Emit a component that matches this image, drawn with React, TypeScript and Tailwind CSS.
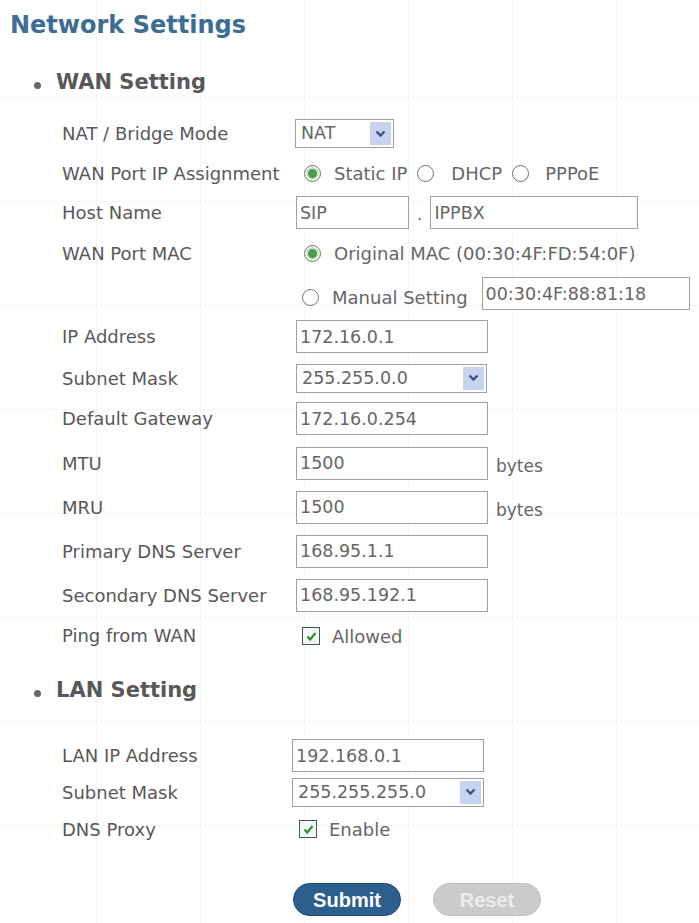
import React from 'react';

const font = { fontFamily: '"DejaVu Sans", Verdana, sans-serif' };

function Radio({ checked }: { checked?: boolean }) {
  return (
    <span className="w-[17px] h-[17px] rounded-full border-[1.5px] border-[#707070] bg-white flex items-center justify-center shrink-0">
      {checked && <span className="w-[9px] h-[9px] rounded-full bg-[#4c9c4c] ring-2 ring-[#c8e6c8]" />}
    </span>
  );
}

function Check() {
  return (
    <span className="w-[18px] h-[18px] border border-[#3d5a55] bg-[#f4f8f4] flex items-center justify-center shrink-0">
      <svg width="13" height="13" viewBox="0 0 13 13">
        <path d="M2.5 6.5 L5.2 9.5 L10.5 3" fill="none" stroke="#2f8f2f" strokeWidth="2.2" />
      </svg>
    </span>
  );
}

function TextBox({ value, className }: { value: string; className: string }) {
  return (
    <input
      readOnly
      defaultValue={value}
      className={`h-[33px] border border-[#a0a0a0] bg-white px-[3px] text-[17.5px] text-[#666] outline-none ${className}`}
      style={font}
    />
  );
}

function Select({ value, className }: { value: string; className: string }) {
  return (
    <div className={`h-[29px] border border-[#a0a0a0] bg-white flex items-center justify-between pl-[5px] pr-[2px] ${className}`}>
      <span className="text-[17.5px] text-[#666]">{value}</span>
      <span className="w-[21px] h-[23px] bg-[#c6d4f0] flex items-center justify-center">
        <svg width="11" height="8" viewBox="0 0 11 8">
          <path d="M1.5 1.5 L5.5 5.5 L9.5 1.5" fill="none" stroke="#3e4f86" strokeWidth="2.4" />
        </svg>
      </span>
    </div>
  );
}

function Row({ label, children, className = '' }: { label: string; children?: React.ReactNode; className?: string }) {
  return (
    <div className={`flex items-center ${className}`}>
      <div className="w-[234px] shrink-0 text-[18px] text-[#585858]">{label}</div>
      <div className="flex items-center">{children}</div>
    </div>
  );
}

function Heading({ text, className = '' }: { text: string; className?: string }) {
  return (
    <div className={`flex items-center pl-[34px] ${className}`}>
      <span className="w-[7px] h-[7px] rounded-full bg-[#666] mr-[15px] mt-[4px]" />
      <span className="text-[21px] font-bold text-[#585858]">{text}</span>
    </div>
  );
}

export default function App() {
  return (
    <div
      className="w-[699px] h-[923px] bg-white overflow-hidden bg-[linear-gradient(to_right,#f5f5f5_1px,transparent_1px),linear-gradient(to_bottom,#f6f6f6_1px,transparent_1px)] bg-[size:104px_104px] bg-[position:96px_97px]"
      style={font}
    >
      <div className="pl-[10px] pt-[9px] text-[24px] leading-[32px] font-bold text-[#3d6d94]">Network Settings</div>

      <Heading text="WAN Setting" className="mt-[27px] h-[30px]" />

      <div className="pl-[62px] mt-[21px]">
        <Row label="NAT / Bridge Mode" className="h-[29px]">
          <Select value="NAT" className="w-[99px] -ml-[1px]" />
        </Row>
        <Row label="WAN Port IP Assignment" className="h-[33px] mt-[9px]">
          <div className="flex items-center text-[18px] text-[#666] ml-[8px]">
            <Radio checked />
            <span className="ml-[13px]">Static IP</span>
            <span className="ml-[10px]"><Radio /></span>
            <span className="ml-[17px]">DHCP</span>
            <span className="ml-[10px]"><Radio /></span>
            <span className="ml-[16px]">PPPoE</span>
          </div>
        </Row>
        <Row label="Host Name" className="h-[33px] mt-[6px]">
          <TextBox value="SIP" className="w-[113px]" />
          <span className="mx-[8px] text-[17px] text-[#666] self-end pb-[2px]">.</span>
          <TextBox value="IPPBX" className="w-[208px]" />
        </Row>
        <Row label="WAN Port MAC" className="h-[33px] mt-[8px]">
          <div className="flex items-center text-[18px] text-[#666] ml-[8px]">
            <Radio checked />
            <span className="ml-[13px]">Original MAC (00:30:4F:FD:54:0F)</span>
          </div>
        </Row>
        <Row label="" className="h-[33px] mt-[7px]">
          <div className="flex items-center text-[18px] text-[#666] ml-[6px]">
            <span className="mt-[8px] flex items-center">
              <Radio />
              <span className="ml-[13px]">Manual Setting</span>
            </span>
            <TextBox value="00:30:4F:88:81:18" className="w-[208px] ml-[14px]" />
          </div>
        </Row>
        <Row label="IP Address" className="h-[33px] mt-[10px]">
          <TextBox value="172.16.0.1" className="w-[192px]" />
        </Row>
        <Row label="Subnet Mask" className="h-[30px] mt-[10px]">
          <Select value="255.255.0.0" className="w-[191px]" />
        </Row>
        <Row label="Default Gateway" className="h-[33px] mt-[9px]">
          <TextBox value="172.16.0.254" className="w-[192px]" />
        </Row>
        <Row label="MTU" className="h-[34px] mt-[11px]">
          <TextBox value="1500" className="w-[192px]" />
          <span className="ml-[8px] mt-[8px] text-[17px] text-[#666]">bytes</span>
        </Row>
        <Row label="MRU" className="h-[34px] mt-[10px]">
          <TextBox value="1500" className="w-[192px]" />
          <span className="ml-[8px] mt-[8px] text-[17px] text-[#666]">bytes</span>
        </Row>
        <Row label="Primary DNS Server" className="h-[34px] mt-[10px]">
          <TextBox value="168.95.1.1" className="w-[192px]" />
        </Row>
        <Row label="Secondary DNS Server" className="h-[34px] mt-[10px]">
          <TextBox value="168.95.192.1" className="w-[192px]" />
        </Row>
        <Row label="Ping from WAN" className="h-[30px] mt-[8px]">
          <div className="flex items-center text-[18px] text-[#666] ml-[6px] mt-[2px]">
            <Check />
            <span className="ml-[12px]">Allowed</span>
          </div>
        </Row>
      </div>

      <Heading text="LAN Setting" className="mt-[26px] h-[30px]" />

      <div className="pl-[62px] mt-[33px]">
        <Row label="LAN IP Address" className="h-[33px]">
          <TextBox value="192.168.0.1" className="w-[192px] -ml-[4px]" />
        </Row>
        <Row label="Subnet Mask" className="h-[30px] mt-[5px]">
          <Select value="255.255.255.0" className="w-[192px] -ml-[4px]" />
        </Row>
        <Row label="DNS Proxy" className="h-[30px] mt-[7px]">
          <div className="flex items-center text-[18px] text-[#666] ml-[3px]">
            <Check />
            <span className="ml-[12px]">Enable</span>
          </div>
        </Row>
      </div>

      <div className="flex pl-[293px] mt-[39px] gap-[32px]" style={{ fontFamily: '"Liberation Sans", Arial, sans-serif' }}>
        <button className="w-[108px] h-[33px] rounded-full bg-[#2c5f8d] border border-[#1d4a72] text-white text-[20px] font-bold">
          Submit
        </button>
        <button className="w-[108px] h-[33px] rounded-full bg-[#cbcbcb] border border-[#c0c0c0] text-[#ececec] text-[20px] font-bold">
          Reset
        </button>
      </div>
    </div>
  );
}
